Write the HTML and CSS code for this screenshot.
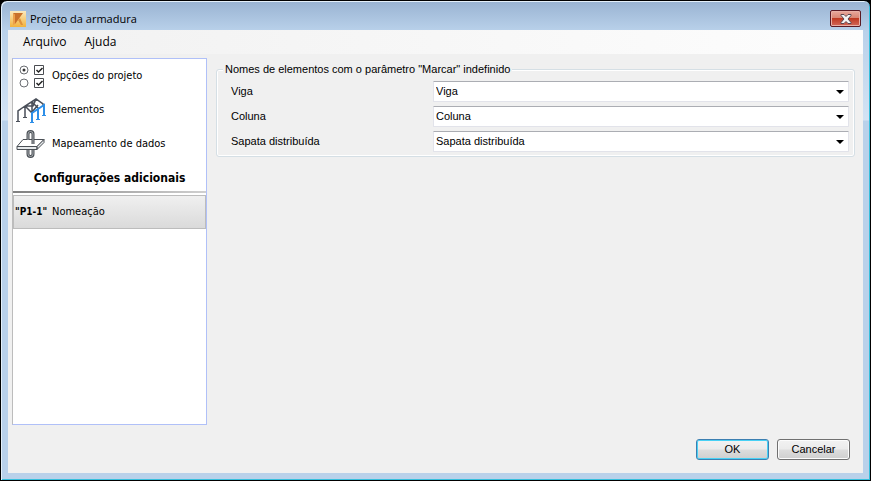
FILE: index.html
```html
<!DOCTYPE html>
<html lang="pt-BR">
<head>
    <meta charset="UTF-8">
    <meta name="viewport" content="width=device-width, initial-scale=1.0">
    <title>Projeto da armadura</title>
    <link rel="stylesheet" href="styles.css">
</head>
<body>
    <div class="window">
        <header class="titlebar">
            <svg class="app-icon" width="16" height="16" viewBox="0 0 16 16">
                <defs>
                    <linearGradient id="appBg" x1="0" y1="0" x2="0" y2="1">
                        <stop offset="0" stop-color="#fbe9bd"/>
                        <stop offset="1" stop-color="#f2b23c"/>
                    </linearGradient>
                </defs>
                <rect width="16" height="16" fill="url(#appBg)"/>
                <path d="M3 2l2 2v9l-2 1z" fill="#eda04a"/>
                <path d="M3 2h10L8 9l-3 4V4z" fill="#c9702a"/>
                <path d="M8 9l2-2 3 7h-2z" fill="#e0913a"/>
            </svg>
            <h1 class="title">Projeto da armadura</h1>
            <button type="button" class="close" aria-label="Fechar">
                <svg width="12" height="10" viewBox="0 0 12 10">
                    <path d="M1 .5h3l2 2 2-2h3v1L8 5l3 3.500v1H8l-2-2-2 2H1v-1L4 5 1 1.500z" fill="#f4f4f4" stroke="#5b4852" stroke-width="1"/>
                </svg>
            </button>
        </header>

        <div class="client">
            <nav class="menubar">
                <button type="button">Arquivo</button>
                <button type="button">Ajuda</button>
            </nav>

            <main class="content">
                <nav class="sidebar">
                    <button type="button" class="nav-item">
                        <svg width="32" height="32" viewBox="0 -1 32 32" fill="none" stroke="#6a6d72">
                            <circle cx="9" cy="10" r="4"/>
                            <circle cx="9" cy="10" r="1.500" fill="#333" stroke="none"/>
                            <circle cx="9" cy="23" r="4"/>
                            <path d="M19.500 5.500h9v9h-9zM19.500 18.500h9v9h-9z" stroke="#4a4d52"/>
                            <path d="M21.500 10l2 2 4-4M21.500 23l2 2 4-4" stroke="#222" stroke-width="1.500"/>
                        </svg>
                        Opções do projeto
                    </button>
                    <button type="button" class="nav-item">
                        <svg width="32" height="32" viewBox="0 -1 32 32" fill="none" stroke="#4a4f59" stroke-width="1.500">
                            <path d="M3 27V17l7-5 11-7 7 5v2M10 12v11M10 12l7 7M17 8l7 7M17 8v10M10 12h8l3-7M17 18l6-7"/>
                            <path d="M1 27.500h4M8 23.500h4" stroke-width="1"/>
                            <path d="M17 28V19l12-8v10M23 25V15" stroke="#2e8fe8" stroke-width="2"/>
                            <path d="M15 28.500h4M21 25.500h4M27 21.500h4" stroke="#2e8fe8" stroke-width="1"/>
                        </svg>
                        Elementos
                    </button>
                    <button type="button" class="nav-item">
                        <svg width="32" height="32" viewBox="0 -1 32 32" fill="none" stroke="#4a4f55">
                            <path d="M13 20v6a2.500 2.500 0 0 0 5 0v-6" stroke-width="3"/>
                            <path d="M13 20v6a2.500 2.500 0 0 0 5 0v-6" stroke="#a5aaae"/>
                            <path d="M8 11.500h21l-7 7H2z" fill="#fff"/>
                            <path d="M2 18.500h20v3H2zM22 18.500l7-7v3l-7 7z" fill="#e6e9eb"/>
                            <path d="M18 16V6a2.500 2.500 0 0 0-5 0v6" stroke-width="3"/>
                            <path d="M18 16V6a2.500 2.500 0 0 0-5 0v6" stroke="#a5aaae"/>
                        </svg>
                        Mapeamento de dados
                    </button>
                    <h2 class="nav-heading">Configurações adicionais</h2>
                    <button type="button" class="nav-item selected" aria-current="page">
                        <span class="mark">"P1-1"</span>
                        Nomeação
                    </button>
                </nav>

                <form class="panel" id="naming">
                    <fieldset class="group">
                        <legend>Nomes de elementos com o parâmetro "Marcar" indefinido</legend>
                        <div class="row">
                            <label for="viga">Viga</label>
                            <div class="combo">
                                <select id="viga"><option>Viga</option></select>
                            </div>
                        </div>
                        <div class="row">
                            <label for="coluna">Coluna</label>
                            <div class="combo">
                                <select id="coluna"><option>Coluna</option></select>
                            </div>
                        </div>
                        <div class="row">
                            <label for="sapata">Sapata distribuída</label>
                            <div class="combo">
                                <select id="sapata"><option>Sapata distribuída</option></select>
                            </div>
                        </div>
                    </fieldset>
                </form>
            </main>

            <footer class="actions">
                <button type="submit" form="naming" class="btn default">OK</button>
                <button type="button" class="btn">Cancelar</button>
            </footer>
        </div>
    </div>
</body>
</html>
```

FILE: styles.css
```css
* {
    box-sizing: border-box;
}
body {
    margin: 0;
    background: #000;
    color: #000;
    font-family: "Liberation Sans", Arial, sans-serif;
    font-size: 11px;
}
button, select {
    font: inherit;
    color: inherit;
}
.window {
    display: flex;
    flex-direction: column;
    min-height: 100vh;
    padding: 0 6px 7px;
    border: 1px solid #000;
    border-radius: 7px 7px 0 0;
    background: linear-gradient(#99b3d2, #b9d1ea 30px, #d3e3f4 119px, #b9d1ea 120px);
    box-shadow: inset 1px 1px 0 #e4f0fa, inset -1px -1px 0 #35bfdc;
}
.titlebar {
    display: flex;
    align-items: center;
    height: 29px;
    padding: 6px 1px 0 3px;
}
.title {
    flex: 1;
    margin: 0 0 0 4px;
    font: 11px/16px "Open Sans", "Segoe UI", sans-serif;
}
.close {
    display: flex;
    align-items: center;
    justify-content: center;
    width: 31px;
    height: 17px;
    margin-right: 2px;
    padding: 0;
    border: 1px solid #5a1a24;
    border-radius: 2px;
    background: linear-gradient(#e9a99d, #d98775 45%, #bf3a22 50%, #d3695a);
    box-shadow: inset 0 0 0 1px #e8b0a6;
}
.client {
    display: flex;
    flex: 1;
    flex-direction: column;
    margin: 0 1px;
    background: #f0f0f0;
}
.menubar {
    display: flex;
    gap: 18px;
    height: 24px;
    padding: 0 15px;
    background: linear-gradient(90deg, #f1f1f1, #fdfdfd);
}
.menubar button {
    padding: 0;
    border: 0;
    background: none;
    font: 12px/24px "Open Sans", "Segoe UI", sans-serif;
}
.content {
    display: flex;
    flex: 1;
    gap: 9px;
    padding: 4px 8px 0 4px;
}
.sidebar {
    width: 195px;
    border: 1px solid #b0c0f8;
    border-left-color: #bcbcbc;
    background: #fff;
    font-family: "DejaVu Sans Condensed", Tahoma, sans-serif;
}
.nav-item {
    display: flex;
    align-items: center;
    gap: 5px;
    width: 100%;
    height: 34px;
    padding: 0 2px 2px;
    border: 0;
    background: none;
    text-align: left;
}
.nav-item.selected {
    margin-top: 2px;
    padding: 0 1px 2px;
    border: 1px solid #bcbcbc;
    background: linear-gradient(#f0f0f0, #dadada);
}
.mark {
    width: 32px;
    font-size: 10px;
    font-weight: bold;
    white-space: nowrap;
}
.nav-heading {
    margin: 0;
    padding-top: 4px;
    border-bottom: 2px solid;
    border-image: linear-gradient(90deg, #808080, #d0d0d0) 1;
    font-size: 12px;
    line-height: 26px;
    text-align: center;
}
.panel {
    flex: 1;
}
.group {
    margin: 4px 0 0;
    padding: 5px 5px 4px 14px;
    border: 1px solid #d5dfe5;
    border-radius: 3px;
    box-shadow: inset 0 0 0 1px #fff;
}
.group legend {
    margin-left: -8px;
    padding: 0 2px;
    line-height: 14px;
    background: #f0f0f0;
}
.row {
    display: flex;
    align-items: center;
    margin-bottom: 4px;
}
.row:last-child {
    margin-bottom: 0;
}
.row label {
    width: 202px;
    padding-bottom: 2px;
}
.combo {
    position: relative;
    flex: 1;
}
.combo::after {
    content: "";
    position: absolute;
    top: 9px;
    right: 5px;
    border: 4px solid transparent;
    border-top-color: #000;
    border-bottom: 0;
    pointer-events: none;
}
.combo select {
    display: block;
    width: 100%;
    height: 21px;
    padding: 0 2px 2px;
    border: 1px solid #e2e3ea;
    border-top-color: #abadb3;
    border-radius: 1px;
    background: #fff;
    appearance: none;
}
.actions {
    display: flex;
    justify-content: flex-end;
    gap: 8px;
    padding: 14px 13px 13px;
}
.btn {
    width: 73px;
    height: 21px;
    padding: 0 0 2px;
    border: 1px solid #707070;
    border-radius: 3px;
    background: linear-gradient(#f2f2f2, #ebebeb 48%, #dddddd 52%, #cfcfcf);
    box-shadow: inset 0 0 0 1px #fcfcfc;
}
.btn.default {
    border-color: #3c7fb1;
    box-shadow: inset 0 0 0 1px #48d1f5;
}
```
